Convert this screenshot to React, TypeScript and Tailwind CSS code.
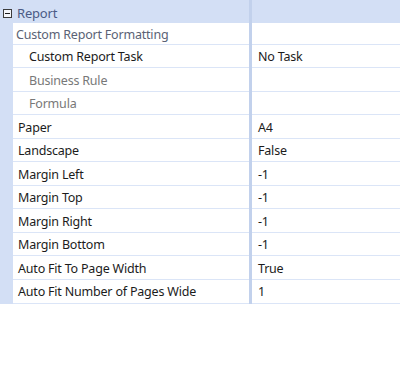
import React from "react";

type Row = {
  label: string;
  value?: string;
  indent: number;
  tone: "group" | "normal" | "muted";
};

const rows: Row[] = [
  { label: "Custom Report Formatting", indent: 3, tone: "group" },
  { label: "Custom Report Task", value: "No Task", indent: 16, tone: "normal" },
  { label: "Business Rule", indent: 16, tone: "muted" },
  { label: "Formula", indent: 16, tone: "muted" },
  { label: "Paper", value: "A4", indent: 5, tone: "normal" },
  { label: "Landscape", value: "False", indent: 5, tone: "normal" },
  { label: "Margin Left", value: "-1", indent: 5, tone: "normal" },
  { label: "Margin Top", value: "-1", indent: 5, tone: "normal" },
  { label: "Margin Right", value: "-1", indent: 5, tone: "normal" },
  { label: "Margin Bottom", value: "-1", indent: 5, tone: "normal" },
  { label: "Auto Fit To Page Width", value: "True", indent: 5, tone: "normal" },
  { label: "Auto Fit Number of Pages Wide", value: "1", indent: 5, tone: "normal" },
];

function MinusBox() {
  return (
    <svg width="9" height="9" viewBox="0 0 9 9" className="shrink-0">
      <rect x="0.5" y="0.5" width="8" height="8" fill="#f4f6fa" stroke="#3c3c3c" />
      <line x1="2" y1="4.5" x2="7" y2="4.5" stroke="#1e1e1e" />
    </svg>
  );
}

export default function App() {
  return (
    <div
      className="w-[400px] h-[368px] bg-white text-[12.5px] leading-none"
      style={{ fontFamily: '"Noto Sans", "Open Sans", sans-serif' }}
    >
      <div className="flex h-[23px] bg-[#d3dff5]">
        <div className="w-[249px] flex items-center gap-[5px] pl-[3px] pt-[3px] text-[#4b5b85]">
          <MinusBox />
          <span className="text-[13px] tracking-[-0.2px]">Report</span>
        </div>
        <div className="w-[3px] bg-[#c2d1ec]" />
        <div className="flex-1" />
      </div>
      <div className="flex">
        <div className="w-[13px] bg-[#d3dff5]" />
        <div className="flex-1">
          {rows.map((r, i) => (
            <div
              key={r.label}
              className={
                (i === 0 ? "h-[21.5px] pt-[4px] " : "h-[23.55px] pt-[3px] ") +
                "flex border-b border-[#dbe5f7]"
              }
            >
              <div
                className={
                  "w-[236px] flex items-center tracking-[-0.2px] " +
                  (r.tone === "group"
                    ? "text-[#5a6275]"
                    : r.tone === "muted"
                    ? "text-[#787878]"
                    : "text-[#1c1c1c]")
                }
                style={{ paddingLeft: r.indent }}
              >
                {r.label}
              </div>
              <div className="w-[3px] bg-[#c2d1ec] -mt-[4px] -mb-px" />
              <div className="flex-1 flex items-center pl-[6px] tracking-[-0.2px] text-[#1c1c1c]">
                {r.value}
              </div>
            </div>
          ))}
        </div>
      </div>
    </div>
  );
}
